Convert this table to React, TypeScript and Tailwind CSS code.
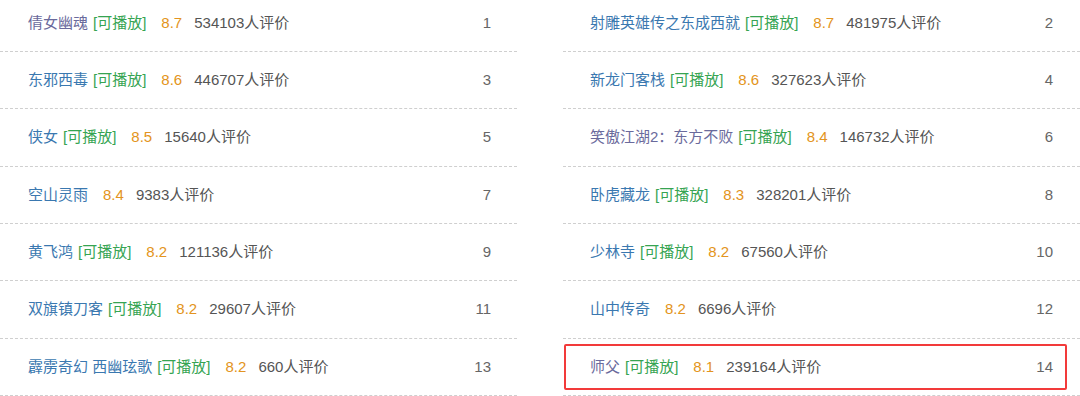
import React from "react";

type Item = { rank: number; title: string; play: boolean; rating: string; count: string; visited?: boolean; hl?: boolean };

const items: Item[] = [
  { rank: 1, title: "倩女幽魂", play: true, rating: "8.7", count: "534103", visited: true },
  { rank: 2, title: "射雕英雄传之东成西就", play: true, rating: "8.7", count: "481975" },
  { rank: 3, title: "东邪西毒", play: true, rating: "8.6", count: "446707" },
  { rank: 4, title: "新龙门客栈", play: true, rating: "8.6", count: "327623" },
  { rank: 5, title: "侠女", play: true, rating: "8.5", count: "15640" },
  { rank: 6, title: "笑傲江湖2：东方不败", play: true, rating: "8.4", count: "146732", visited: true },
  { rank: 7, title: "空山灵雨", play: false, rating: "8.4", count: "9383" },
  { rank: 8, title: "卧虎藏龙", play: true, rating: "8.3", count: "328201" },
  { rank: 9, title: "黄飞鸿", play: true, rating: "8.2", count: "121136" },
  { rank: 10, title: "少林寺", play: true, rating: "8.2", count: "67560" },
  { rank: 11, title: "双旗镇刀客", play: true, rating: "8.2", count: "29607" },
  { rank: 12, title: "山中传奇", play: false, rating: "8.2", count: "6696" },
  { rank: 13, title: "霹雳奇幻 西幽玹歌", play: true, rating: "8.2", count: "660" },
  { rank: 14, title: "师父", play: true, rating: "8.1", count: "239164", visited: true, hl: true },
];

function Row({ it, right }: { it: Item; right: boolean }) {
  return (
    <div
      className={`relative flex h-[57.33px] items-center border-b border-dashed border-[#cfcfcf] ${
        right ? "pl-[27px] pr-[27px]" : "pl-[28px] pr-[26px]"
      }`}
    >
      <div className="flex flex-1 items-center whitespace-nowrap">
        <span className={it.visited ? "text-[#6a6a9c]" : "text-[#3a78b0]"}>{it.title}</span>
        {it.play && <span className="ml-[5px] text-[#36a452]">[可播放]</span>}
        <span className="ml-[15px] text-[#e39420]">{it.rating}</span>
        <span className="ml-[12px] text-[#555555]">{it.count}人评价</span>
      </div>
      <span className="text-[#666666]">{it.rank}</span>
      {it.hl && (
        <div className="pointer-events-none absolute left-[1px] right-[13px] top-[5px] bottom-[5px] rounded-[2px] border-2 border-[#f23a3a]" />
      )}
    </div>
  );
}

export default function App() {
  const left = items.filter((i) => i.rank % 2 === 1);
  const right = items.filter((i) => i.rank % 2 === 0);
  return (
    <div
      className="h-[396px] w-[1080px] overflow-hidden bg-white text-[15px]"
      style={{ fontFamily: '"Liberation Sans", Arial, "Noto Sans CJK SC", sans-serif' }}
    >
      <div className="mt-[-5.3px] flex gap-[46px]">
        <div className="w-[517px]">
          {left.map((it) => (
            <Row key={it.rank} it={it} right={false} />
          ))}
        </div>
        <div className="w-[517px]">
          {right.map((it) => (
            <Row key={it.rank} it={it} right={true} />
          ))}
        </div>
      </div>
    </div>
  );
}
